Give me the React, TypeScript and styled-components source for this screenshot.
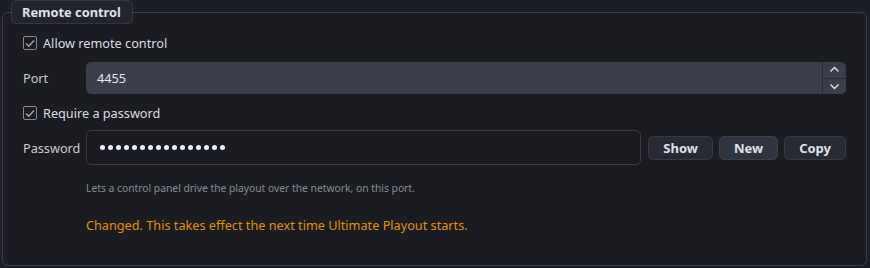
import React from "react";
import styled, { createGlobalStyle } from "styled-components";

const Global = createGlobalStyle`
  html, body { margin: 0; padding: 0; background: #1b1e25; }
  body { font-family: "Noto Sans", "Open Sans", sans-serif; font-size: 12.7px; color: #d9dbe0; }
  * { box-sizing: border-box; }
`;

const Page = styled.div`
  width: 870px;
  height: 268px;
  padding: 12px 3px 2px 2px;
`;

const Group = styled.section`
  position: relative;
  height: 254px;
  border: 1px solid #393c48;
  border-radius: 6px;
  background: #1a1c22;
  padding: 21px 20px 0 19px;
  display: flex;
  flex-direction: column;
`;

const Tab = styled.div`
  position: absolute;
  left: 8px;
  top: -13px;
  height: 24px;
  padding: 0 11px 0 10px;
  display: flex;
  align-items: center;
  background: #21242c;
  border: 1px solid #343743;
  border-radius: 5px;
  font-weight: 700;
  font-size: 12.8px;
  color: #dfe2e8;
`;

const CheckRow = styled.label<{ $mt?: number }>`
  display: flex;
  align-items: center;
  gap: 6px;
  height: 18px;
  margin-top: ${(p) => p.$mt ?? 0}px;
  padding-left: 1px;
  color: #dcdee3;
`;

const Box = styled.span`
  width: 14px;
  height: 14px;
  border: 1px solid #868a93;
  border-radius: 2px;
  display: flex;
  align-items: center;
  justify-content: center;
`;

const FieldRow = styled.div<{ $mt: number; $h: number }>`
  display: flex;
  align-items: center;
  margin-top: ${(p) => p.$mt}px;
  height: ${(p) => p.$h}px;
`;

const Label = styled.span`
  width: 64px;
  padding-left: 1px;
  color: #c9ccd2;
`;

const Spin = styled.div`
  flex: 1;
  height: 100%;
  display: flex;
  background: #3b3e4b;
  border-radius: 5px;
`;

const SpinValue = styled.span`
  flex: 1;
  display: flex;
  align-items: center;
  padding-left: 11px;
  color: #e6e8ec;
`;

const SpinButtons = styled.div`
  width: 24px;
  display: flex;
  flex-direction: column;
  border-left: 1px solid #2a2c35;
`;

const SpinBtn = styled.span<{ $top?: boolean }>`
  flex: 1;
  display: flex;
  align-items: center;
  justify-content: center;
  border-bottom: ${(p) => (p.$top ? "1px solid #2a2c35" : "none")};
`;

const PassBox = styled.div`
  flex: 1;
  height: 100%;
  display: flex;
  align-items: center;
  border: 1px solid #3a3d46;
  border-radius: 5px;
  padding-left: 13px;
`;

const Dots = styled.span`
  display: flex;
  gap: 3px;
`;

const Dot = styled.span`
  width: 5px;
  height: 5px;
  border-radius: 50%;
  background: #eef3ff;
`;

const Buttons = styled.div`
  display: flex;
  gap: 6px;
  margin-left: 7px;
`;

const Button = styled.button<{ $hi?: boolean }>`
  height: 24px;
  padding: 0 14px;
  font-family: inherit;
  font-size: 13px;
  font-weight: 700;
  color: #dfe2e8;
  background: ${(p) => (p.$hi ? "#30343e" : "#272a33")};
  border: 1px solid ${(p) => (p.$hi ? "#3c404b" : "#353944")};
  border-radius: 5px;
`;

const Hint = styled.p`
  margin: 16px 0 0 64px;
  font-size: 10.3px;
  line-height: 14px;
  color: #878c95;
`;

const Warn = styled.p`
  margin: 22px 0 0 64px;
  font-size: 12.7px;
  line-height: 17px;
  color: #e3900f;
`;

const Check = () => (
  <Box>
    <svg width="10" height="9" viewBox="0 0 10 9">
      <path d="M1 4.5 L3.8 7.3 L9 1.5" fill="none" stroke="#a3a6ad" strokeWidth="1.4" />
    </svg>
  </Box>
);

const Chevron = ({ up }: { up?: boolean }) => (
  <svg width="11" height="7" viewBox="0 0 11 7">
    <path d={up ? "M1.5 5.5 L5.5 1.5 L9.5 5.5" : "M1.5 1.5 L5.5 5.5 L9.5 1.5"} fill="none" stroke="#e4e6ea" strokeWidth="1.3" />
  </svg>
);

export default function App() {
  return (
    <Page>
      <Global />
      <Group>
        <Tab>Remote control</Tab>
        <CheckRow>
          <Check />
          Allow remote control
        </CheckRow>
        <FieldRow $mt={10} $h={32}>
          <Label>Port</Label>
          <Spin>
            <SpinValue>4455</SpinValue>
            <SpinButtons>
              <SpinBtn $top>
                <Chevron up />
              </SpinBtn>
              <SpinBtn>
                <Chevron />
              </SpinBtn>
            </SpinButtons>
          </Spin>
        </FieldRow>
        <CheckRow $mt={10}>
          <Check />
          Require a password
        </CheckRow>
        <FieldRow $mt={8} $h={35}>
          <Label>Password</Label>
          <PassBox>
            <Dots>
              {Array.from({ length: 16 }).map((_, i) => (
                <Dot key={i} />
              ))}
            </Dots>
          </PassBox>
          <Buttons>
            <Button>Show</Button>
            <Button $hi>New</Button>
            <Button>Copy</Button>
          </Buttons>
        </FieldRow>
        <Hint>Lets a control panel drive the playout over the network, on this port.</Hint>
        <Warn>Changed. This takes effect the next time Ultimate Playout starts.</Warn>
      </Group>
    </Page>
  );
}
